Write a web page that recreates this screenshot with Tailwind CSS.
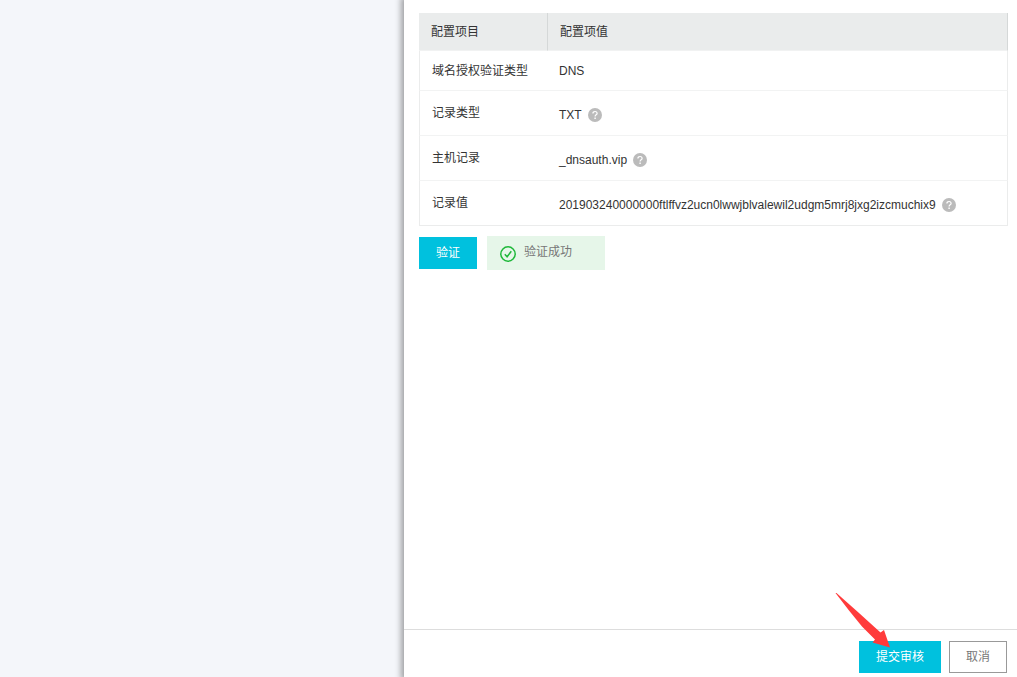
<!DOCTYPE html>
<html lang="zh-CN">
<head>
<meta charset="utf-8">
<meta name="viewport" content="width=device-width, initial-scale=1">
<title>域名授权验证</title>
<script src="https://cdn.jsdelivr.net/npm/@tailwindcss/browser@4"></script>
</head>
<body class="flex min-h-screen bg-[#f4f6fa] font-['Liberation_Sans','Noto_Sans_CJK_SC',sans-serif] text-xs text-[#333]">
<svg class="hidden" aria-hidden="true">
  <symbol id="help" viewBox="0 0 14 14">
    <circle cx="7" cy="7" r="7" fill="#bbb"/>
    <path d="M4.9 5.6C4.9 4.2 5.7 3.5 7 3.5S9.1 4.2 9.1 5.4C9.1 6.8 7.1 6.8 7.1 8.4" fill="none" stroke="#fff" stroke-width="1.2"/>
    <path d="M6.4 9.5h1.4v1.4H6.4z" fill="#fff"/>
  </symbol>
</svg>
<main class="ml-auto flex w-[613px] max-w-full flex-col bg-white shadow-[0_0_6px_3px_rgba(0,0,0,0.35)]">
  <div class="flex-1 pt-[13px] pr-[9px] pl-[15px]">
    <table class="w-full table-fixed border-separate border-spacing-0 border-b border-[#ebecec] text-left">
      <colgroup><col class="w-[129px]"><col></colgroup>
      <thead class="bg-[#eaecec]">
        <tr class="h-[38px]">
          <th class="border-r border-b border-r-[#d5d8d8] border-b-[#f1f2f2] pl-3 font-normal">配置项目</th>
          <th class="border-r border-b border-r-[#d5d8d8] border-b-[#f1f2f2] pl-3 font-normal">配置项值</th>
        </tr>
      </thead>
      <tbody>
        <tr class="h-10">
          <th scope="row" class="border-b border-l border-b-[#f2f3f3] border-l-[#ebecec] pl-3 font-normal">域名授权验证类型</th>
          <td class="border-r border-b border-r-[#ebecec] border-b-[#f2f3f3] pl-[11px]">DNS</td>
        </tr>
        <tr class="h-[45px]">
          <th scope="row" class="border-b border-l border-b-[#f2f3f3] border-l-[#ebecec] pl-3 font-normal">记录类型</th>
          <td class="border-r border-b border-r-[#ebecec] border-b-[#f2f3f3] pt-1 pl-[11px]"><div class="flex items-center gap-[6px]"><span>TXT</span><button type="button" aria-label="记录类型说明"><svg class="size-[14px]"><use href="#help"/></svg></button></div></td>
        </tr>
        <tr class="h-[45px]">
          <th scope="row" class="border-b border-l border-b-[#f2f3f3] border-l-[#ebecec] pl-3 font-normal">主机记录</th>
          <td class="border-r border-b border-r-[#ebecec] border-b-[#f2f3f3] pt-1 pl-[11px]"><div class="flex items-center gap-[6px]"><span>_dnsauth.vip</span><button type="button" aria-label="主机记录说明"><svg class="size-[14px]"><use href="#help"/></svg></button></div></td>
        </tr>
        <tr class="h-11">
          <th scope="row" class="border-l border-[#ebecec] pl-3 font-normal">记录值</th>
          <td class="border-r border-[#ebecec] pt-1 pl-[11px]"><div class="flex items-center gap-[6px]"><span>201903240000000ftlffvz2ucn0lwwjblvalewil2udgm5mrj8jxg2izcmuchix9</span><button type="button" aria-label="记录值说明"><svg class="size-[14px]"><use href="#help"/></svg></button></div></td>
        </tr>
      </tbody>
    </table>
    <div class="mt-[10px] flex items-center gap-[10px]">
      <button type="button" class="h-8 w-[58px] bg-[#00c1de] text-white">验证</button>
      <div role="status" class="flex h-[34px] w-[118px] items-center gap-2 bg-[#e6f6e9] pl-[13px] text-[#777]">
        <svg class="mt-[2px] size-4" viewBox="0 0 16 16" fill="none" stroke="#1fb83a" stroke-width="1.5"><circle cx="8" cy="8" r="7.2"/><path d="M4.8 8.2l2.3 2.6 4.2-5.6"/></svg>
        <span class="pb-[2px]">验证成功</span>
      </div>
    </div>
  </div>
  <footer class="flex justify-end gap-2 border-t border-[#ddd] pt-[11px] pr-[10px] pb-1">
    <div class="relative">
      <button type="button" class="h-8 w-[82px] bg-[#00c1de] text-white">提交审核</button>
      <svg class="pointer-events-none absolute -top-12 -left-6 size-14" viewBox="0 0 56 56" aria-hidden="true"><path d="M.5 0L1.5 0 24 20 45.500 39.500 49 37 55 54.500 37.500 49.500 40 46.500 27 33.500 14 17.500Z" fill="#ff3b3b"/></svg>
    </div>
    <button type="button" class="h-8 w-[58px] border border-[#999] bg-white text-[#777]">取消</button>
  </footer>
</main>
</body>
</html>
